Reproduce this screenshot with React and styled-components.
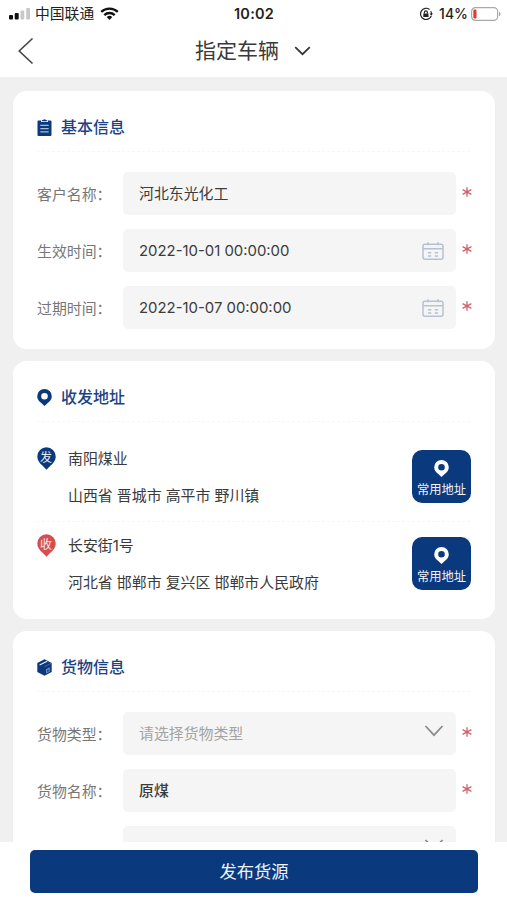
import React from 'react'
import styled, { createGlobalStyle } from 'styled-components'

const basicFields = [
    { label: '客户名称：', value: '河北东光化工', required: true },
    { label: '生效时间：', value: '2022-10-01 00:00:00', icon: 'calendar', required: true },
    { label: '过期时间：', value: '2022-10-07 00:00:00', icon: 'calendar', required: true },
]

const addresses = [
    { type: '发', color: '#0a397d', name: '南阳煤业', detail: '山西省 晋城市 高平市 野川镇' },
    { type: '收', color: '#d64c4f', name: '长安街1号', detail: '河北省 邯郸市 复兴区 邯郸市人民政府' },
]

const goodsFields = [
    { label: '货物类型：', placeholder: '请选择货物类型', icon: 'arrow', required: true },
    { label: '货物名称：', value: '原煤', strong: true, required: true },
    { label: '', value: '', icon: 'arrow' },
]

function Pin({ size = 15, color = '#0a397d' }) {
    return (
        <svg width={size} height={size * 17 / 15} viewBox="0 0 15 17">
            <path fill={color} fillRule="evenodd" d="M7.5 0A7.3 7.3 0 0 0 .2 7.2c0 3.1 2 5.2 4.1 6.9L7.5 17l3.2-2.9c2.1-1.7 4.1-3.8 4.1-6.9A7.3 7.3 0 0 0 7.5 0Zm0 3.9a3.3 3.3 0 1 1 0 6.6 3.3 3.3 0 0 1 0-6.6Z" />
        </svg>
    )
}

function Clipboard() {
    return (
        <svg width="15" height="17" viewBox="0 0 15 17">
            <path fill="#0a397d" d="M1.5 1.5H4V3h7V1.5h2.5a1 1 0 0 1 1 1V16a1 1 0 0 1-1 1h-12a1 1 0 0 1-1-1V2.5a1 1 0 0 1 1-1Z" />
            <path fill="#0a397d" d="M4.8 2.2V1.2l1.4-.3a1.4 1.2 0 0 1 2.6 0l1.4.3v1Z" />
            <path stroke="#a9bbd8" strokeWidth="1.2" d="M3.3 6.3h8.4M3.3 9.6h8.4M3.3 12.9h8.4" />
        </svg>
    )
}

function Box() {
    return (
        <svg width="15" height="17" viewBox="0 0 15 17">
            <path fill="#0a397d" d="M7.5.3 14.7 4v9L7.5 16.8.3 13V4Z" />
            <path fill="none" stroke="#e6ecf5" strokeWidth="1.2" d="m2.6 6 7.6-3.7" />
            <path fill="none" stroke="#5f7eb0" strokeWidth=".7" d="m7.5 7.6 6.6-3.3" />
            <path fill="#6e8bbb" d="m9 10.2 3.8-1.9v4.5L9 14.6Z" />
            <path fill="#0a397d" d="m10.3 11 1.3-.6v2l-1.3.6Z" />
        </svg>
    )
}

function Calendar() {
    return (
        <svg width="22" height="18" viewBox="0 0 22 18" fill="none" stroke="#b7c1d3" strokeWidth="1.5">
            <rect x="1" y="2.2" width="20" height="15" rx="2" />
            <path d="M1 6.8h20M6 .3v3M16 .3v3" />
            <path d="M6 10.7h3.3M12.7 10.7H16M6 14h3.3M12.7 14H16" />
        </svg>
    )
}

function Arrow() {
    return (
        <svg width="20" height="12" viewBox="0 0 20 12" fill="none" stroke="#8c8c8c" strokeWidth="1.8">
            <path d="m1.5 1 8.5 9.2L18.5 1" />
        </svg>
    )
}

function StatusIcons() {
    return (
        <svg width="22" height="12" viewBox="0 0 22 12">
            <rect x="0" y="7" width="4" height="4.5" rx="1" fill="#111" />
            <rect x="5.7" y="5" width="4" height="6.5" rx="1" fill="#111" />
            <rect x="11.5" y="2.5" width="3.8" height="9" rx="1" fill="#c8c8c8" />
            <rect x="17.2" y="0" width="3.8" height="11.5" rx="1" fill="#c8c8c8" />
        </svg>
    )
}

function Wifi() {
    return (
        <svg width="19" height="13" viewBox="0 0 19 13">
            <path fill="none" stroke="#111" strokeWidth="2.3" d="M1.2 4.9a12 12 0 0 1 16.6 0M4.3 8.1a7.5 7.5 0 0 1 10.4 0" />
            <path fill="#111" d="m9.5 13-2.8-2.9a4 4 0 0 1 5.6 0Z" />
        </svg>
    )
}

function RotationLock() {
    return (
        <svg width="14" height="14" viewBox="0 0 14 14" fill="none" stroke="#222" strokeWidth="1.2">
            <path d="M10.5 2.4A5.6 5.6 0 1 0 12.3 9M12.5 7.2a5.6 5.6 0 0 0-.8-3" />
            <path fill="#222" stroke="none" d="M10.6 6.4h3.4l-1.7 2.4ZM4.3 6.4h5.2v3.7H4.3Z" />
            <path d="M5.4 6.6V5.4a1.5 1.5 0 0 1 3 0v1.2" />
        </svg>
    )
}

function Battery() {
    return (
        <svg width="30" height="14" viewBox="0 0 30 14">
            <rect x=".6" y=".6" width="26" height="12.8" rx="3.8" fill="#fff" stroke="#a9a9a9" strokeWidth="1.2" />
            <rect x="2.3" y="2.5" width="3.2" height="9" rx="1.2" fill="#e5383c" />
            <path fill="#a9a9a9" d="M28 4.7c2 .7 2 3.9 0 4.6Z" />
        </svg>
    )
}

function FormRow({ field }) {
    return (
        <Row>
            <Label>{field.label}</Label>
            <Field>
                <Value $placeholder={!field.value} $strong={field.strong}>{field.value || field.placeholder}</Value>
                {field.icon === 'calendar' && <Calendar />}
                {field.icon === 'arrow' && <ArrowWrap><Arrow /></ArrowWrap>}
            </Field>
            {field.required && (
                <Required>
                    <svg width="10" height="10" viewBox="0 0 10 10" stroke="#d0606a" strokeWidth="1.3">
                        <path d="M5 .2v9.6M.6 2.6l8.8 4.8M.6 7.4l8.8-4.8" />
                    </svg>
                </Required>
            )}
        </Row>
    )
}

function App() {
    return (
        <Page>
            <GlobalStyle />
            <StatusBar>
                <Carrier>
                    <StatusIcons />
                    <span>中国联通</span>
                    <Wifi />
                </Carrier>
                <Time>10:02</Time>
                <Power>
                    <RotationLock />
                    <span>14%</span>
                    <Battery />
                </Power>
            </StatusBar>
            <NavBar>
                <Back>
                    <svg width="16" height="28" viewBox="0 0 16 28" fill="none" stroke="#444" strokeWidth="1.6">
                        <path d="M14.5 1.5 1.2 14l13.3 12.5" />
                    </svg>
                </Back>
                <NavTitle>指定车辆</NavTitle>
                <svg width="17" height="10" viewBox="0 0 17 10" fill="none" stroke="#333" strokeWidth="1.7">
                    <path d="m1.2 1.2 7.3 7 7.3-7" />
                </svg>
            </NavBar>
            <Content>
                <Card>
                    <CardTitle><Clipboard /><h2>基本信息</h2></CardTitle>
                    <Form>
                        {basicFields.map((field, index) => <FormRow field={field} key={index} />)}
                    </Form>
                </Card>
                <Card>
                    <CardTitle><Pin /><h2>收发地址</h2></CardTitle>
                    {addresses.map((item, index) => (
                        <Address key={index}>
                            <Marker>
                                <svg width="19" height="23" viewBox="0 0 19 23">
                                    <path fill={item.color} d="M9.5.3A9.2 9.2 0 0 0 .3 9.5c0 4 2.4 6.6 5.1 9.1l4.1 4.1 4.1-4.1c2.7-2.5 5.1-5.1 5.1-9.1A9.2 9.2 0 0 0 9.5.3Z" />
                                </svg>
                                <MarkerText>{item.type}</MarkerText>
                            </Marker>
                            <AddressText>
                                <p>{item.name}</p>
                                <p>{item.detail}</p>
                            </AddressText>
                            <CommonButton>
                                <Pin size={15} color="#fff" />
                                <span>常用地址</span>
                            </CommonButton>
                        </Address>
                    ))}
                </Card>
                <Card>
                    <CardTitle><Box /><h2>货物信息</h2></CardTitle>
                    <Form>
                        {goodsFields.map((field, index) => <FormRow field={field} key={index} />)}
                    </Form>
                </Card>
            </Content>
            <Footer>
                <Submit>发布货源</Submit>
            </Footer>
        </Page>
    )
}

export default App

const GlobalStyle = createGlobalStyle`
    *{
        box-sizing:border-box;
    }
    body{
        margin:0;
        font-family:Inter, "Noto Sans CJK SC", sans-serif;
        color:#3a3a3a;
    }
    h1, h2, p{
        margin:0;
        font-weight:400;
    }
    svg{
        display:block;
        flex-shrink:0;
    }
    button{
        border:0;
        padding:0;
        font-family:inherit;
        color:#f0f4fa;
    }
`

const Page = styled.div`
    width:507px;
    height:900px;
    display:flex;
    flex-direction:column;
    overflow:hidden;
    background:#f0f0f0;
`

const StatusBar = styled.div`
    height:27px;
    flex-shrink:0;
    display:grid;
    grid-template-columns:1fr auto 1fr;
    align-items:center;
    padding:0 6px 0 9px;
    background:#fff;
    font-size:14px;
    color:#222;
`

const Carrier = styled.div`
    display:flex;
    align-items:center;
    span{
        font-size:14.8px;
        line-height:20px;
        margin:0 6px 0 4px;
    }
`

const Time = styled.div`
    font-size:14.5px;
    font-weight:600;
    letter-spacing:.2px;
    margin-right:2px;
`

const Power = styled.div`
    display:flex;
    align-items:center;
    justify-content:flex-end;
    span{
        margin:0 3px 0 6px;
        font-weight:500;
    }
`

const NavBar = styled.div`
    height:50px;
    flex-shrink:0;
    display:flex;
    align-items:center;
    padding:0 18px 2px;
    background:#fff;
`

const Back = styled.div`
    width:177px;
`

const NavTitle = styled.h1`
    font-size:21px;
    line-height:30px;
    margin-right:15px;
`

const Content = styled.div`
    flex:1;
    min-height:0;
    overflow:hidden;
    display:flex;
    flex-direction:column;
    gap:12px;
    padding:14px 12px 0 13px;
`

const Card = styled.section`
    height:258px;
    flex-shrink:0;
    padding:0 25px 0 24px;
    border-radius:14px;
    background:#fff;
`

const CardTitle = styled.div`
    height:61px;
    display:flex;
    align-items:center;
    gap:9px;
    padding-top:12px;
    border-bottom:1px dashed #f7f7f7;
    h2{
        font-size:16px;
        font-weight:500;
        line-height:24px;
        color:#1b4383;
    }
`

const Form = styled.div`
    display:flex;
    flex-direction:column;
    gap:14.2px;
    padding-top:20px;
    margin-right:-6px;
`

const Row = styled.div`
    height:43px;
    display:flex;
    align-items:center;
`

const Label = styled.div`
    width:86px;
    flex-shrink:0;
    padding-bottom:1px;
    font-size:14.9px;
    white-space:nowrap;
    color:#777;
`

const Field = styled.div`
    width:333px;
    height:43px;
    flex-shrink:0;
    display:flex;
    align-items:center;
    justify-content:space-between;
    padding:0 12px 0 16px;
    border-radius:5px;
    background:#f5f5f5;
`

const Value = styled.span`
    padding-top:1px;
    font-size:14.9px;
    line-height:22px;
    font-weight:${props => props.$strong ? 500 : 400};
    color:${props => props.$placeholder ? '#a3a3a3' : '#3c3c3c'};
`

const ArrowWrap = styled.div`
    padding-bottom:5px;
`

const Required = styled.div`
    padding:0 0 4px 6px;
`

const Address = styled.div`
    height:87px;
    display:flex;
    align-items:flex-start;
    padding-top:25px;
    & + &{
        border-top:1px dashed #f7f7f7;
        margin-top:12px;
        padding-top:12px;
    }
`

const Marker = styled.div`
    position:relative;
    width:31px;
`

const MarkerText = styled.span`
    position:absolute;
    left:3px;
    top:2px;
    font-size:12px;
    line-height:17px;
    color:#e8edf6;
`

const AddressText = styled.div`
    flex:1;
    font-size:14.9px;
    p{
        line-height:24px;
    }
    p + p{
        margin-top:13px;
    }
`

const CommonButton = styled.button`
    width:59px;
    height:53px;
    margin-top:3px;
    margin-right:-1px;
    display:flex;
    flex-direction:column;
    align-items:center;
    gap:4px;
    padding-top:10px;
    border-radius:10px;
    background:#0a397d;
    span{
        font-size:12.3px;
        line-height:17px;
        white-space:nowrap;
    }
`

const Footer = styled.div`
    height:58px;
    flex-shrink:0;
    padding:8px 29px 0 30px;
    background:#fff;
`

const Submit = styled.button`
    width:100%;
    height:43px;
    padding-bottom:2px;
    border-radius:5px;
    background:#0a397d;
    font-size:17.3px;
`
